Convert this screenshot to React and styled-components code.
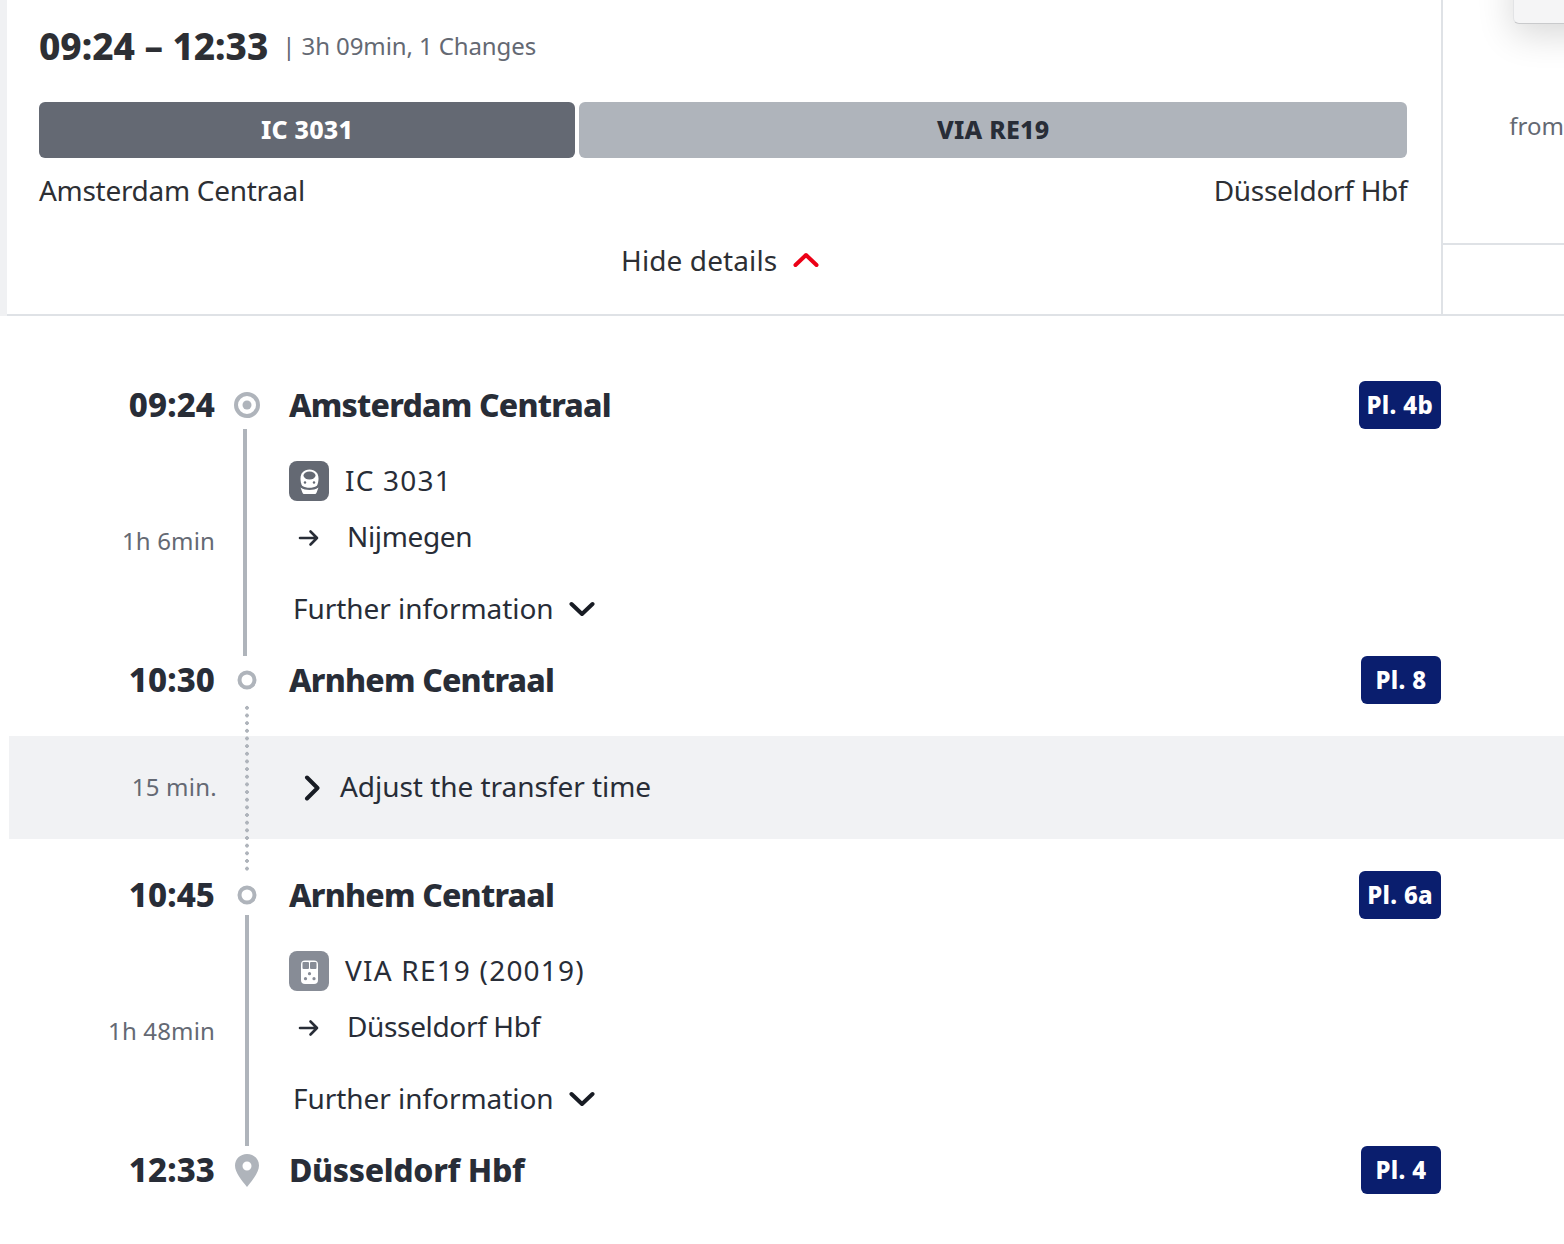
import React from 'react';
import styled, { createGlobalStyle } from 'styled-components';

const GlobalStyle = createGlobalStyle`
  html, body {
    margin: 0;
    padding: 0;
    background: #fff;
    overflow: hidden;
  }
  body {
    font-family: 'Noto Sans', 'Open Sans', sans-serif;
    color: #282d37;
  }
`;

const stops = {
  first: { time: '09:24', name: 'Amsterdam Centraal', platform: 'Pl. 4b', tracking: -0.8 },
  change1: { time: '10:30', name: 'Arnhem Centraal', platform: 'Pl. 8', tracking: -0.8 },
  change2: { time: '10:45', name: 'Arnhem Centraal', platform: 'Pl. 6a', tracking: -0.8 },
  last: { time: '12:33', name: 'Düsseldorf Hbf', platform: 'Pl. 4', tracking: -0.35 },
};

const IntercityIcon = () => (
  <svg width="40" height="40" viewBox="0 0 40 40">
    <path
      d="M20.500 8.500c5.500 0 9 3.500 9 9 0 2.800-.6 5.300-1.600 7.300-2.300 1.400-4.800 2-7.400 2s-5.100-.6-7.400-2c-1-2-1.600-4.500-1.600-7.300 0-5.500 3.500-9 9-9z"
      fill="#fff"
    />
    <ellipse cx="20.500" cy="14.500" rx="6" ry="4" fill="#646973" />
    <circle cx="16" cy="21.500" r="1.200" fill="#646973" />
    <circle cx="25" cy="21.500" r="1.200" fill="#646973" />
    <path
      d="M11.500 26.500c2.800 1.800 5.800 2.500 9 2.500s6.200-.7 9-2.500l-2 5.300c-.3.8-1 1.200-1.800 1.200H15.300c-.8 0-1.500-.4-1.800-1.200z"
      fill="#fff"
    />
  </svg>
);

const RegionalIcon = () => (
  <svg width="40" height="40" viewBox="0 0 40 40">
    <rect x="12" y="9.500" width="17" height="23.500" rx="4" fill="#fff" />
    <rect x="13.500" y="11" width="6.500" height="7" rx="1" fill="#878c96" />
    <rect x="21" y="11" width="6.500" height="7" rx="1" fill="#878c96" />
    <circle cx="20.500" cy="22.700" r="1.600" fill="#878c96" />
    <circle cx="16.500" cy="27.700" r="1.600" fill="#878c96" />
    <circle cx="25" cy="27.700" r="1.600" fill="#878c96" />
  </svg>
);

const ArrowIcon = () => (
  <svg width="22" height="18" viewBox="0 0 22 18" fill="none" stroke="#282d37" strokeWidth="2.600" strokeLinecap="round" strokeLinejoin="round">
    <path d="M2 9h17M12.500 2.500 19 9l-6.500 6.500" />
  </svg>
);

const ChevronDown = () => (
  <svg width="26" height="16" viewBox="0 0 26 16" fill="none" stroke="#181c24" strokeWidth="4" strokeLinecap="round" strokeLinejoin="round">
    <path d="M2.500 3 13 13 23.500 3" />
  </svg>
);

const ChevronUp = () => (
  <svg width="26" height="16" viewBox="0 0 26 16" fill="none" stroke="#ec0016" strokeWidth="4" strokeLinecap="round" strokeLinejoin="round">
    <path d="M2.500 13 13 3l10.500 10" />
  </svg>
);

const ChevronRight = () => (
  <svg width="16" height="26" viewBox="0 0 16 26" fill="none" stroke="#181c24" strokeWidth="4" strokeLinecap="round" strokeLinejoin="round">
    <path d="M3 2.500 13.500 13 3 23.500" />
  </svg>
);

const StartMarker = () => (
  <svg width="26" height="26" viewBox="0 0 26 26">
    <circle cx="13" cy="13" r="11" fill="none" stroke="#afb4bb" strokeWidth="4" />
    <circle cx="13" cy="13" r="4.500" fill="#afb4bb" />
  </svg>
);

const StopMarker = () => (
  <svg width="20" height="20" viewBox="0 0 20 20">
    <circle cx="10" cy="10" r="7.500" fill="none" stroke="#afb4bb" strokeWidth="4" />
  </svg>
);

const PinMarker = () => (
  <svg width="24" height="33" viewBox="0 0 24 33">
    <path
      fillRule="evenodd"
      d="M12 0c6.800 0 12 5 12 11.500 0 7-6.500 14.500-12 21.500C6.500 26 0 18.500 0 11.500 0 5 5.200 0 12 0zm0 7.500a4.500 4.500 0 1 0 0 9 4.500 4.500 0 0 0 0-9z"
      fill="#afb4bb"
    />
  </svg>
);

const StopRow = ({ stop, marker }) => (
  <Row>
    <Time>{stop.time}</Time>
    <MarkerCell>{marker}</MarkerCell>
    <StationName $tracking={stop.tracking}>{stop.name}</StationName>
    <Platform>{stop.platform}</Platform>
  </Row>
);

const Leg = ({ icon, iconColor, train, destination, duration, lineShift, lineRaise }) => (
  <LegGrid>
    <Duration>{duration}</Duration>
    <LineCell>
      <Line $shift={lineShift} $raise={lineRaise} />
    </LineCell>
    <LegBody>
      <TrainRow>
        <TrainBadge $color={iconColor}>{icon}</TrainBadge>
        <TrainName>{train}</TrainName>
      </TrainRow>
      <DestinationRow>
        <ArrowIcon />
        <span>{destination}</span>
      </DestinationRow>
      <FurtherRow>
        <span>Further information</span>
        <ChevronDown />
      </FurtherRow>
    </LegBody>
  </LegGrid>
);

export default function App() {
  return (
    <Page>
      <GlobalStyle />
      <Header>
        <Summary>
          <TitleRow>
            <Title>09:24 – 12:33</Title>
            <Subtitle>| 3h 09min, 1 Changes</Subtitle>
          </TitleRow>
          <Bars>
            <Bar $grow={536} $dark>IC 3031</Bar>
            <Bar $grow={828}>VIA RE19</Bar>
          </Bars>
          <Ends>
            <span>Amsterdam Centraal</span>
            <span>Düsseldorf Hbf</span>
          </Ends>
          <Toggle>
            <span>Hide details</span>
            <ChevronUp />
          </Toggle>
        </Summary>
        <PriceColumn>
          <PriceTop>from</PriceTop>
          <PricePopup />
        </PriceColumn>
      </Header>

      <Journey>
        <StopRow stop={stops.first} marker={<StartMarker />} />
        <Leg
          icon={<IntercityIcon />}
          iconColor="#646973"
          train="IC 3031"
          destination="Nijmegen"
          duration="1h 6min"
          lineShift={-2}
        />
        <StopRow stop={stops.change1} marker={<StopMarker />} />
        <Transfer>
          <Dots />
          <TransferBand>
            <TransferTime>15 min.</TransferTime>
            <TransferAction>
              <ChevronRight />
              <span>Adjust the transfer time</span>
            </TransferAction>
          </TransferBand>
        </Transfer>
        <StopRow stop={stops.change2} marker={<StopMarker />} />
        <Leg
          icon={<RegionalIcon />}
          iconColor="#878c96"
          train="VIA RE19 (20019)"
          destination="Düsseldorf Hbf"
          duration="1h 48min"
          lineShift={0}
          lineRaise={4}
        />
        <StopRow stop={stops.last} marker={<PinMarker />} />
      </Journey>
    </Page>
  );
}

const Page = styled.div`
  width: 1564px;
  height: 1244px;
  overflow: hidden;
  background: #fff;
`;

const Header = styled.header`
  display: flex;
  height: 316px;
  box-sizing: border-box;
  border-left: 7px solid #f0f1f3;
  position: relative;
  &::after {
    content: '';
    position: absolute;
    left: 0;
    right: 0;
    bottom: 0;
    height: 2px;
    background: #dfe2e6;
  }
`;

const Summary = styled.section`
  width: 1435px;
  box-sizing: border-box;
  padding: 0 34px 0 32px;
  display: flex;
  flex-direction: column;
`;

const TitleRow = styled.div`
  display: flex;
  align-items: center;
  gap: 14px;
  height: 102px;
  padding-bottom: 10px;
  box-sizing: border-box;
`;

const Title = styled.h1`
  margin: 0;
  font-size: 37px;
  line-height: 48px;
  font-weight: 800;
  letter-spacing: -0.05px;
  color: #2d2f34;
`;

const Subtitle = styled.span`
  padding-bottom: 2px;
  font-size: 24px;
  letter-spacing: -0.1px;
  color: #646973;
`;

const Bars = styled.div`
  display: flex;
  gap: 4px;
  height: 56px;
`;

const Bar = styled.div`
  flex: ${({ $grow }) => $grow} 0 0;
  display: flex;
  align-items: center;
  justify-content: center;
  padding-bottom: 2px;
  box-sizing: border-box;
  border-radius: 6px;
  font-size: 25px;
  font-weight: 800;
  letter-spacing: 0.2px;
  background: ${({ $dark }) => ($dark ? '#646973' : '#afb4bb')};
  color: ${({ $dark }) => ($dark ? '#fff' : '#282d37')};
`;

const Ends = styled.div`
  display: flex;
  justify-content: space-between;
  margin-top: 13px;
  font-size: 28px;
  line-height: 38px;
  letter-spacing: -0.3px;
  color: #2d2f34;
`;

const Toggle = styled.div`
  display: flex;
  align-items: center;
  justify-content: center;
  gap: 16px;
  margin-top: 31px;
  padding-right: 6px;
  font-size: 28px;
  line-height: 40px;
  letter-spacing: 0.1px;
  color: #2d2f34;
`;

const PriceColumn = styled.aside`
  flex: 1;
  position: relative;
  border-left: 2px solid #dfe2e6;
  height: 314px;
`;

const PriceTop = styled.div`
  height: 245px;
  box-sizing: border-box;
  border-bottom: 2px solid #dfe2e6;
  padding: 108px 0 0 66px;
  font-size: 24px;
  line-height: 36px;
  color: #646973;
`;

const PricePopup = styled.div`
  position: absolute;
  top: -40px;
  left: 70px;
  width: 120px;
  height: 62px;
  background: #f5f5f6;
  border: 1px solid #e2e3e5;
  border-bottom-color: #c9cacc;
  border-radius: 6px;
  box-shadow: 0 10px 36px rgba(0, 0, 0, 0.16);
`;

const Journey = styled.main`
  padding-top: 65px;
`;

const Row = styled.div`
  display: grid;
  grid-template-columns: 215px 64px 1fr auto;
  align-items: center;
  height: 48px;
  padding-right: 123px;
`;

const Time = styled.div`
  text-align: right;
  font-size: 33px;
  line-height: 46px;
  font-weight: 800;
  letter-spacing: 0.1px;
  color: #282d37;
`;

const MarkerCell = styled.div`
  display: flex;
  align-items: center;
  justify-content: center;
`;

const StationName = styled.div`
  padding-left: 10px;
  font-size: 32px;
  line-height: 46px;
  font-weight: 800;
  letter-spacing: ${({ $tracking }) => $tracking}px;
  color: #282d37;
`;

const Platform = styled.div`
  height: 48px;
  min-width: 80px;
  box-sizing: border-box;
  padding: 0 8px 2px;
  display: flex;
  align-items: center;
  justify-content: center;
  border-radius: 6px;
  background: #0a1e6e;
  color: #fff;
  font-size: 24px;
  font-weight: 800;
  letter-spacing: 0.3px;
`;

const LegGrid = styled.div`
  display: grid;
  grid-template-columns: 215px 64px 1fr;
  height: 227px;
`;

const Duration = styled.div`
  align-self: center;
  padding-bottom: 4px;
  text-align: right;
  font-size: 24px;
  letter-spacing: 0.15px;
  color: #646973;
`;

const LineCell = styled.div`
  display: flex;
  justify-content: center;
`;

const Line = styled.div`
  width: 4px;
  margin-left: ${({ $shift }) => ($shift || 0) * 2}px;
  margin-top: ${({ $raise }) => -($raise || 0)}px;
  background: #afb4bb;
`;

const LegBody = styled.div`
  padding: 32px 0 0 10px;
  display: flex;
  flex-direction: column;
  font-size: 28px;
  color: #282d37;
`;

const TrainRow = styled.div`
  display: flex;
  align-items: center;
  gap: 16px;
  height: 40px;
`;

const TrainBadge = styled.div`
  width: 40px;
  height: 40px;
  display: flex;
  align-items: center;
  justify-content: center;
  border-radius: 8px;
  background: ${({ $color }) => $color};
`;

const TrainName = styled.span`
  padding-bottom: 2px;
  line-height: 38px;
  letter-spacing: 1.2px;
`;

const DestinationRow = styled.div`
  display: flex;
  align-items: center;
  gap: 27px;
  height: 40px;
  margin-top: 17px;
  padding-left: 9px;
  letter-spacing: -0.35px;
  span {
    padding-bottom: 4px;
  }
`;

const FurtherRow = styled.div`
  display: flex;
  align-items: center;
  gap: 15px;
  height: 40px;
  margin-top: 31px;
  padding-left: 4px;
  letter-spacing: -0.05px;
  span {
    padding-bottom: 2px;
  }
`;

const Transfer = styled.div`
  position: relative;
  height: 167px;
  padding: 32px 0;
  box-sizing: border-box;
`;

const Dots = styled.div`
  position: absolute;
  z-index: 1;
  top: 0;
  bottom: 0;
  left: 245px;
  width: 4px;
  background-image: radial-gradient(circle at center, #afb4bb 1.8px, transparent 2.1px);
  background-size: 4px 7.67px;
  background-repeat: repeat-y;
`;

const TransferBand = styled.div`
  margin-left: 9px;
  height: 103px;
  display: grid;
  grid-template-columns: 208px 64px 1fr;
  align-items: center;
  background: #f1f2f4;
`;

const TransferTime = styled.div`
  padding-bottom: 2px;
  text-align: right;
  font-size: 24px;
  letter-spacing: 0.25px;
  color: #646973;
`;

const TransferAction = styled.div`
  grid-column: 3;
  display: flex;
  align-items: center;
  gap: 20px;
  padding-left: 23px;
  font-size: 28px;
  letter-spacing: -0.04px;
  color: #282d37;
  span {
    padding-bottom: 4px;
  }
`;
